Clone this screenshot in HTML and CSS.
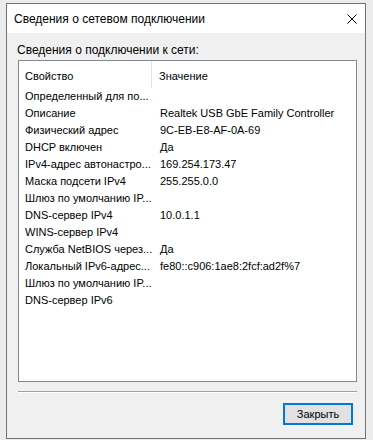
FILE: index.html
```html
<!DOCTYPE html>
<html lang="ru">
<head>
    <meta charset="UTF-8">
    <title>Сведения о сетевом подключении</title>
    <link rel="stylesheet" href="styles.css">
</head>
<body>
    <div class="window">
        <!-- Title bar -->
        <div class="titlebar">
            <span class="title">Сведения о сетевом подключении</span>
            <svg class="close" width="10" height="10" viewBox="0 0 10 10">
                <path d="M0.5 0.5 L9.5 9.5 M9.5 0.5 L0.5 9.5" stroke="#000" stroke-width="1" fill="none"/>
            </svg>
        </div>

        <div class="content">
            <div class="caption">Сведения о подключении к сети:</div>

            <div class="listview">
                <div class="lv-header">
                    <div class="col-prop">Свойство</div>
                    <div class="col-value">Значение</div>
                </div>
                <div class="lv-rows">
                    <div class="lv-row"><span>Определенный для по...</span><span></span></div>
                    <div class="lv-row"><span>Описание</span><span>Realtek USB GbE Family Controller</span></div>
                    <div class="lv-row"><span>Физический адрес</span><span>9C-EB-E8-AF-0A-69</span></div>
                    <div class="lv-row"><span>DHCP включен</span><span>Да</span></div>
                    <div class="lv-row"><span>IPv4-адрес автонастро...</span><span>169.254.173.47</span></div>
                    <div class="lv-row"><span>Маска подсети IPv4</span><span>255.255.0.0</span></div>
                    <div class="lv-row"><span>Шлюз по умолчанию IP...</span><span></span></div>
                    <div class="lv-row"><span>DNS-сервер IPv4</span><span>10.0.1.1</span></div>
                    <div class="lv-row"><span>WINS-сервер IPv4</span><span></span></div>
                    <div class="lv-row"><span>Служба NetBIOS через...</span><span>Да</span></div>
                    <div class="lv-row"><span>Локальный IPv6-адрес...</span><span>fe80::c906:1ae8:2fcf:ad2f%7</span></div>
                    <div class="lv-row"><span>Шлюз по умолчанию IP...</span><span></span></div>
                    <div class="lv-row"><span>DNS-сервер IPv6</span><span></span></div>
                </div>
            </div>

            <div class="separator"></div>

            <div class="buttons">
                <button class="btn-close">Закрыть</button>
            </div>
        </div>
    </div>
</body>
</html>
```

FILE: styles.css
```css
/* General Styles */
body {
    margin: 0;
    padding: 3px 0 0 6px;
    background-color: #ececec;
    font-family: "Liberation Sans", Arial, sans-serif;
    color: #000;
}

.window {
    width: 358px;
    height: 434px;
    border: 1px solid #737373;
    background-color: #f0f0f0;
    display: flex;
    flex-direction: column;
}

/* Title bar */
.titlebar {
    height: 29px;
    background-color: #fff;
    display: flex;
    align-items: center;
    justify-content: space-between;
    padding: 0 7px 0 7px;
}

.title {
    font-size: 12px;
    padding-top: 1px;
}

.close {
    margin-right: 1px;
}

/* Content */
.content {
    flex-grow: 1;
    display: flex;
    flex-direction: column;
    padding: 0 8px 13px 11px;
}

.caption {
    font-size: 12px;
    line-height: 16px;
    margin: 9px 0 2px -1px;
}

.listview {
    height: 320px;
    border: 1px solid #828790;
    background-color: #fff;
    font-size: 11px;
}

.lv-header {
    display: grid;
    grid-template-columns: 133px 1fr;
    height: 27px;
    align-items: center;
}

.col-prop {
    padding: 2px 0 0 6px;
    height: 100%;
    box-sizing: border-box;
    display: flex;
    align-items: center;
    border-right: 1px solid #e5e5e5;
}

.col-value {
    padding: 2px 0 0 7px;
}

.lv-rows {
    display: flex;
    flex-direction: column;
}

.lv-row {
    display: grid;
    grid-template-columns: 134px 1fr;
    height: 17px;
    line-height: 17px;
    white-space: nowrap;
}

.lv-row span:first-child {
    padding-left: 6px;
}

.lv-row span:last-child {
    padding-left: 7px;
}

.separator {
    margin-top: 9px;
    border-top: 1px solid #a0a0a0;
    border-bottom: 1px solid #fff;
}

.buttons {
    margin-top: auto;
    display: flex;
    justify-content: flex-end;
    padding-right: 4px;
}

.btn-close {
    width: 70px;
    height: 22px;
    background-color: #e1e1e1;
    border: 2px solid #0078d7;
    font-family: "Liberation Sans", Arial, sans-serif;
    font-size: 11px;
    color: #000;
    padding: 0;
}
```
